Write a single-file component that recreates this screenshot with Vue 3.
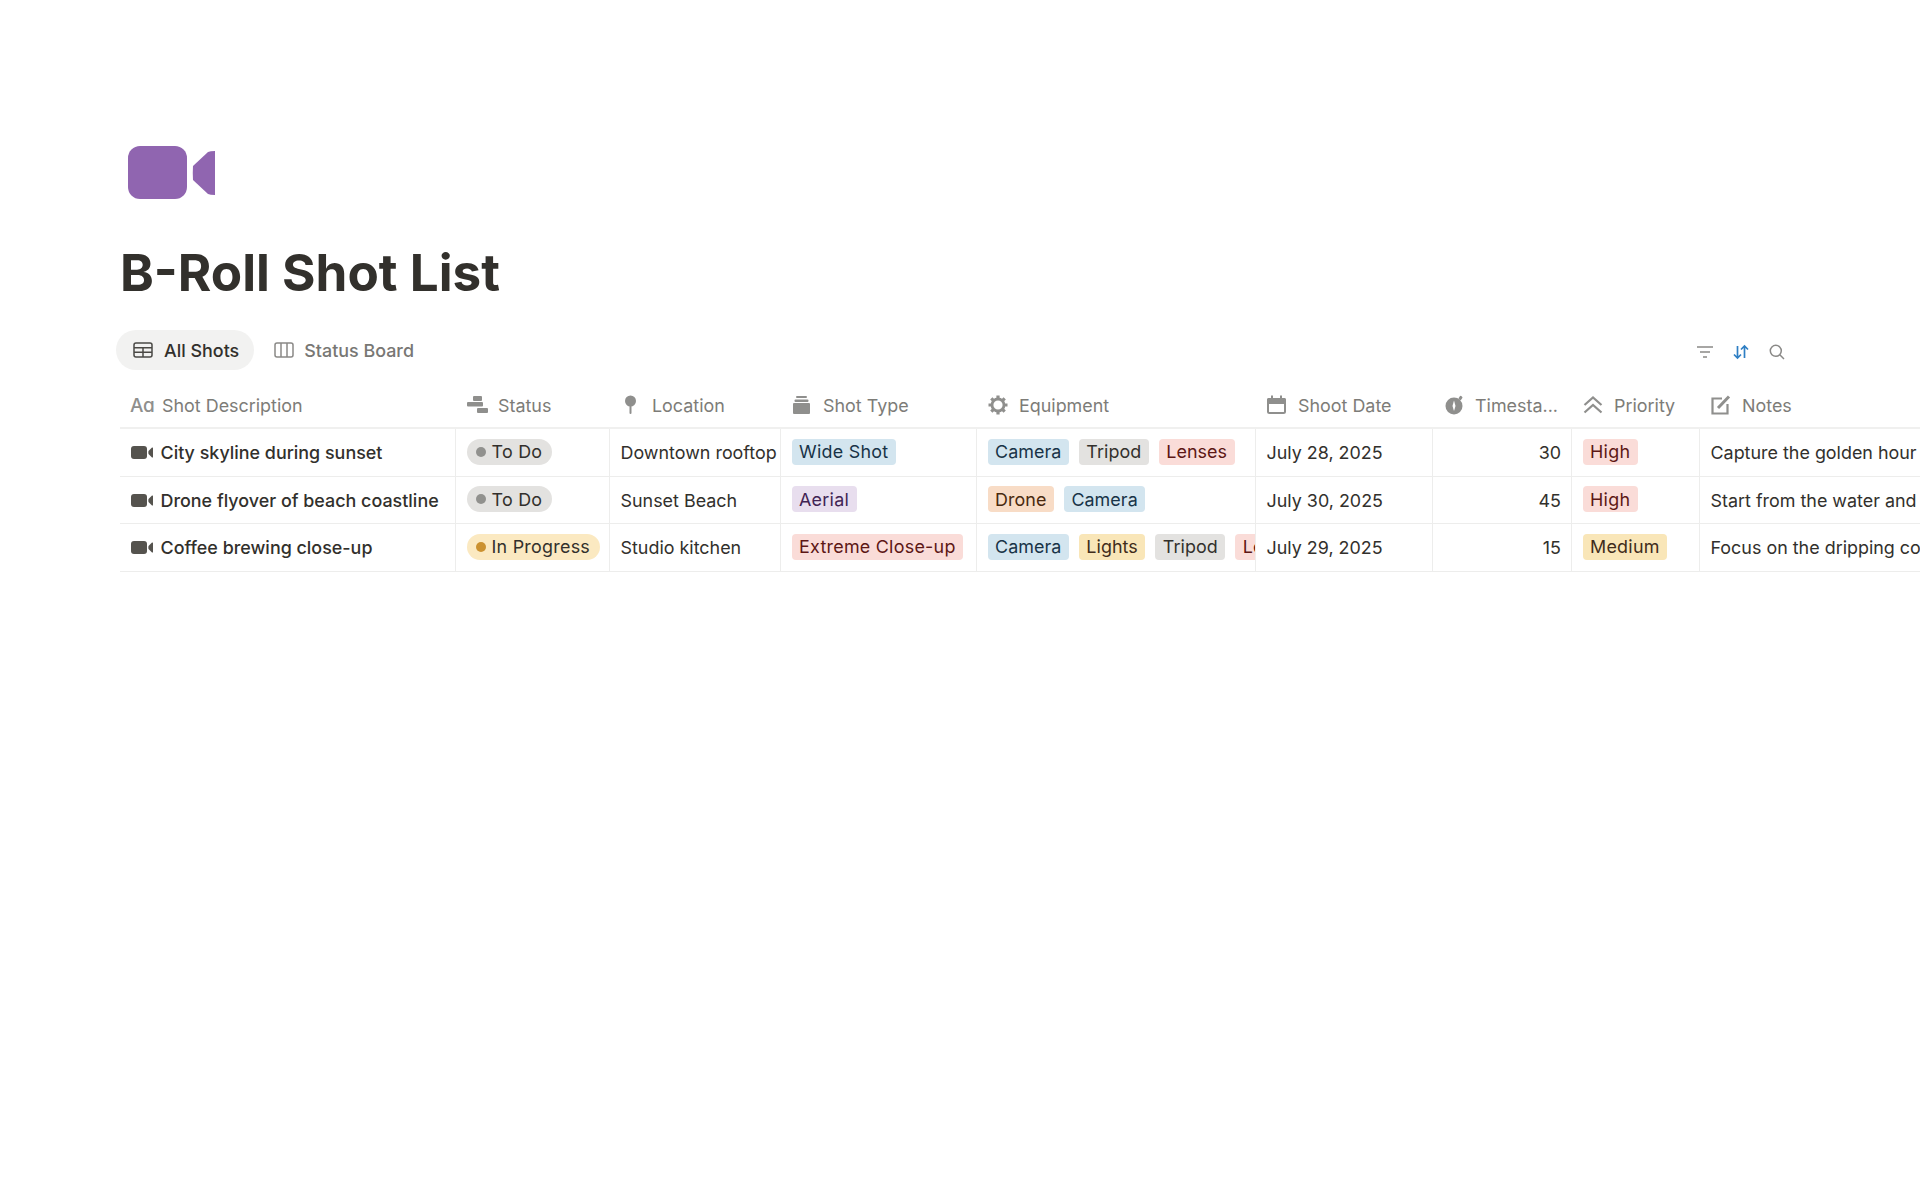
<script setup>
const columns = [
  { key: 'desc', label: 'Shot Description', icon: 'aa', width: 336 },
  { key: 'status', label: 'Status', icon: 'status', width: 154 },
  { key: 'loc', label: 'Location', icon: 'pin', width: 171 },
  { key: 'type', label: 'Shot Type', icon: 'stack', width: 196 },
  { key: 'equip', label: 'Equipment', icon: 'gear', width: 279 },
  { key: 'date', label: 'Shoot Date', icon: 'cal', width: 177 },
  { key: 'time', label: 'Timesta...', icon: 'timer', width: 139 },
  { key: 'pri', label: 'Priority', icon: 'chev', width: 128 },
  { key: 'notes', label: 'Notes', icon: 'note', width: 220 },
]
const rows = [
  {
    title: 'City skyline during sunset', status: 'To Do', statusTone: 'todo', loc: 'Downtown rooftop',
    type: { t: 'Wide Shot', c: 'blue' },
    equip: [{ t: 'Camera', c: 'blue' }, { t: 'Tripod', c: 'gray' }, { t: 'Lenses', c: 'red' }],
    date: 'July 28, 2025', time: 30, pri: { t: 'High', c: 'red' }, notes: 'Capture the golden hour light over the city',
  },
  {
    title: 'Drone flyover of beach coastline', status: 'To Do', statusTone: 'todo', loc: 'Sunset Beach',
    type: { t: 'Aerial', c: 'purple' },
    equip: [{ t: 'Drone', c: 'orange' }, { t: 'Camera', c: 'blue' }],
    date: 'July 30, 2025', time: 45, pri: { t: 'High', c: 'red' }, notes: 'Start from the water and move inland slowly',
  },
  {
    title: 'Coffee brewing close-up', status: 'In Progress', statusTone: 'doing', loc: 'Studio kitchen',
    type: { t: 'Extreme Close-up', c: 'red' },
    equip: [{ t: 'Camera', c: 'blue' }, { t: 'Lights', c: 'yellow' }, { t: 'Tripod', c: 'gray' }, { t: 'Lenses', c: 'red' }],
    date: 'July 29, 2025', time: 15, pri: { t: 'Medium', c: 'yellow' }, notes: 'Focus on the dripping coffee and the rising steam',
  },
]
</script>

<template>
  <div class="page">
    <svg class="page-icon" width="87" height="53" viewBox="0 0 87 53">
      <rect x="0" y="0" width="59" height="53" rx="12" fill="#9065b0" />
      <path d="M65 20 L80 6 Q82 5 87 5 L87 49 Q82 49 80 48 L65 34 Q64.500 27 65 20 Z" fill="#9065b0" />
    </svg>
    <h1 class="title">B-Roll Shot List</h1>

    <div class="tabbar">
      <div class="tab active">
        <svg width="20" height="16" viewBox="0 0 20 16" fill="none" stroke="#4a4945" stroke-width="1.500">
          <rect x="1" y="1" width="18" height="14" rx="2" />
          <path d="M1 5.700H19M1 10.300H19M10 5.700V15" />
        </svg>
        <span>All Shots</span>
      </div>
      <div class="tab idle">
        <svg width="20" height="16" viewBox="0 0 20 16" fill="none" stroke="#8a8987" stroke-width="1.500">
          <rect x="1" y="1" width="18" height="14" rx="2" />
          <path d="M7 1V15M13 1V15" />
        </svg>
        <span>Status Board</span>
      </div>
      <div class="tools">
        <svg width="16" height="14" viewBox="0 0 16 14" fill="none" stroke="#8a8987" stroke-width="1.500">
          <path d="M0 2H16M3 7H13M6 12H10" />
        </svg>
        <svg width="16" height="16" viewBox="0 0 16 16" fill="none" stroke="#2f7fc4" stroke-width="1.700">
          <path d="M4.500 2V14M1 10.500L4.500 14L8 10.500M11.500 14V2M8 5.500L11.500 2L15 5.500" />
        </svg>
        <svg width="16" height="16" viewBox="0 0 16 16" fill="none" stroke="#8a8987" stroke-width="1.500">
          <circle cx="6.800" cy="6.800" r="5.500" />
          <path d="M10.800 10.800L15 15" />
        </svg>
      </div>
    </div>

    <div class="table">
      <div class="row head">
        <div v-for="col in columns" :key="col.key" class="hcell" :style="{ width: col.width + 'px' }">
          <span class="hicon">
            <span v-if="col.icon === 'aa'" class="aa" aria-hidden="true">Aɑ</span>
            <svg v-else-if="col.icon === 'status'" width="22" height="20" viewBox="0 0 22 20" fill="#8f8f8d">
              <rect x="6" y="1" width="9" height="5" rx="1" />
              <rect x="0" y="7" width="16" height="4.500" rx="1" />
              <rect x="10" y="13" width="11" height="5" rx="1" />
            </svg>
            <svg v-else-if="col.icon === 'pin'" width="22" height="20" viewBox="0 0 22 20" fill="#8f8f8d">
              <circle cx="9.500" cy="6" r="5.500" />
              <rect x="8.500" y="9" width="2" height="10" rx="1" />
            </svg>
            <svg v-else-if="col.icon === 'stack'" width="22" height="20" viewBox="0 0 22 20" fill="#8f8f8d">
              <rect x="4" y="1" width="11" height="2" rx="1" />
              <rect x="2.500" y="4.500" width="14" height="2.500" rx="1" />
              <rect x="1" y="8" width="17" height="11" rx="1" />
            </svg>
            <svg v-else-if="col.icon === 'gear'" width="22" height="20" viewBox="0 0 22 20" fill="none" stroke="#8f8f8d">
              <circle cx="10" cy="10" r="6" stroke-width="2.800" />
              <path stroke-width="3.200" d="M10 0.500V4M10 16V19.500M0.500 10H4M16 10H19.500M3.300 3.300L5.800 5.800M14.200 14.200L16.700 16.700M3.300 16.700L5.800 14.200M14.200 5.800L16.700 3.300" />
            </svg>
            <svg v-else-if="col.icon === 'cal'" width="22" height="20" viewBox="0 0 22 20" fill="#8f8f8d">
              <rect x="0" y="3" width="19" height="6" rx="1.500" />
              <rect x="4" y="0.500" width="2" height="4" />
              <rect x="13" y="0.500" width="2" height="4" />
              <rect x="1" y="4" width="17" height="14" rx="1.500" fill="none" stroke="#8f8f8d" stroke-width="2" />
            </svg>
            <svg v-else-if="col.icon === 'timer'" width="22" height="20" viewBox="0 0 22 20" fill="#8f8f8d">
              <circle cx="10" cy="11" r="8.500" />
              <rect x="15" y="1" width="3" height="4" rx="1" transform="rotate(35 16.500 3)" />
              <path d="M10 5.500L11.500 11L10 16L8.500 11Z" fill="#fff" />
            </svg>
            <svg v-else-if="col.icon === 'chev'" width="22" height="20" viewBox="0 0 22 20" fill="none" stroke="#8f8f8d" stroke-width="2.200">
              <path d="M1.500 10L10 2.500L18.500 10M1.500 17.500L10 10L18.500 17.500" />
            </svg>
            <svg v-else-if="col.icon === 'note'" width="22" height="20" viewBox="0 0 22 20" fill="none" stroke="#8f8f8d" stroke-width="2.200">
              <path d="M11 3.500H1.500V18.500H16.500V9" />
              <path stroke-width="3" d="M7 13L18 1.500" />
            </svg>
          </span>
          <span class="hlabel">{{ col.label }}</span>
        </div>
      </div>

      <div v-for="row in rows" :key="row.title" class="row body">
        <div class="cell title-cell" :style="{ width: columns[0].width + 'px' }">
          <svg class="row-icon" width="22" height="13" viewBox="0 0 22 13" fill="#55534e">
            <rect x="0" y="0" width="16" height="13" rx="3" />
            <path d="M17.500 5L21 1.500Q22 1.300 22 2V11Q22 11.700 21 11.500L17.500 8Q17.200 6.500 17.500 5Z" />
          </svg>
          <span>{{ row.title }}</span>
        </div>
        <div class="cell" :style="{ width: columns[1].width + 'px' }">
          <span class="status" :class="row.statusTone"><i class="dot"></i>{{ row.status }}</span>
        </div>
        <div class="cell" :style="{ width: columns[2].width + 'px' }">{{ row.loc }}</div>
        <div class="cell" :style="{ width: columns[3].width + 'px' }">
          <span class="tag" :class="row.type.c">{{ row.type.t }}</span>
        </div>
        <div class="cell tags" :style="{ width: columns[4].width + 'px' }">
          <span v-for="e in row.equip" :key="e.t" class="tag" :class="e.c">{{ e.t }}</span>
        </div>
        <div class="cell" :style="{ width: columns[5].width + 'px' }">{{ row.date }}</div>
        <div class="cell num" :style="{ width: columns[6].width + 'px' }">{{ row.time }}</div>
        <div class="cell" :style="{ width: columns[7].width + 'px' }">
          <span class="tag" :class="row.pri.c">{{ row.pri.t }}</span>
        </div>
        <div class="cell last" :style="{ width: columns[8].width + 'px' }">{{ row.notes }}</div>
      </div>
    </div>
  </div>
</template>

<style>
html, body { background: #fff; overflow: hidden; }
</style>

<style scoped>
.page {
  width: 1920px;
  height: 1199px;
  box-sizing: border-box;
  padding: 146px 0 0 120px;
  overflow: hidden;
  background: #fff;
  color: #32302c;
  font-family: Inter, "Liberation Sans", sans-serif;
  font-size: 17.92px;
}
.page-icon { display: block; margin-left: 8px; }
.title {
  margin: 44px 0 0;
  font-size: 51.2px;
  line-height: 58px;
  font-weight: 700;
  color: #32302c;
}
.tabbar {
  display: flex;
  align-items: center;
  gap: 3px;
  margin: 29px 0 0 -4px;
  height: 40px;
  padding-right: 135px;
}
.tab {
  display: flex;
  align-items: center;
  gap: 11px;
  height: 40px;
  padding: 0 15px 0 17px;
  border-radius: 20px;
  font-weight: 500;
  color: #787774;
}
.tab.idle { gap: 10px; }
.tab.active { background: #f2f2f1; color: #32302c; }
.tools { margin-left: auto; display: flex; align-items: center; gap: 20px; padding-top: 4px; }
.table { margin-top: 12px; }
.row { display: flex; width: 1800px; }
.head { height: 47px; box-sizing: border-box; border-bottom: 2px solid #f0f0ef; }
.hcell {
  flex: none;
  box-sizing: border-box;
  display: flex;
  align-items: center;
  padding: 1px 0 0 11px;
  color: #7d7c78;
  font-weight: 400;
  white-space: nowrap;
}
.hicon { width: 22px; margin-right: 9px; display: flex; align-items: center; }
.aa { font-size: 19px; font-weight: 500; color: #8f8f8d; white-space: nowrap; letter-spacing: -0.5px; margin-left: -1px; }
.body { height: 47.5px; box-sizing: border-box; border-bottom: 1px solid #ededec; }
.cell {
  flex: none;
  box-sizing: border-box;
  display: flex;
  align-items: center;
  padding: 1px 0 0 10.500px;
  border-right: 1px solid #ededec;
  white-space: nowrap;
  overflow: hidden;
}
.cell.last { border-right: 0; overflow: visible; }
.title-cell { font-weight: 500; }
.row-icon { flex: none; margin: 0 7.500px 0 0.500px; }
.num { justify-content: flex-end; padding-right: 10px; }
.tags { gap: 10px; }
.status {
  display: inline-flex;
  align-items: center;
  height: 26px;
  padding: 0 10px 0 9px;
  border-radius: 13px;
  margin-top: -2px;
  letter-spacing: 0.25px;
}
.dot { width: 10px; height: 10px; border-radius: 50%; margin-right: 6px; flex: none; }
.todo { background: #e3e2e0; }
.todo .dot { background: #91918e; }
.doing { background: #fbe9c1; }
.doing .dot { background: #cb912f; }
.tag {
  flex: none;
  display: inline-flex;
  align-items: center;
  height: 26px;
  padding: 0 7.500px;
  border-radius: 4px;
  margin-top: -2px;
  letter-spacing: 0.25px;
}
.tags .tag { letter-spacing: 0.05px; }
.blue { background: #d3e5ef; color: #183347; }
.gray { background: #e3e2e0; color: #32302c; }
.red { background: #fadcd8; color: #5d1715; }
.orange { background: #f8dcc6; color: #49290e; }
.purple { background: #e8deee; color: #412454; }
.yellow { background: #f9e6b8; color: #402c1b; }
</style>
